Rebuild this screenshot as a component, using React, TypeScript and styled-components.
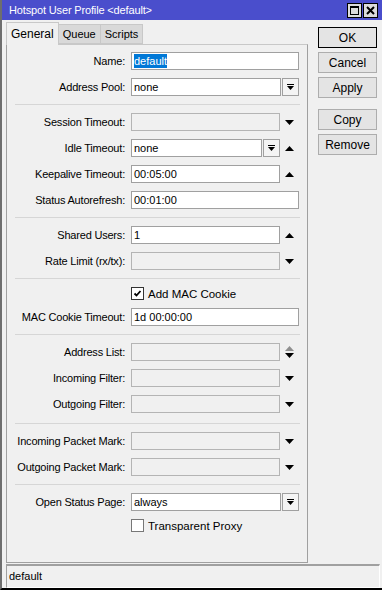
import React from "react";
import styled, { createGlobalStyle } from "styled-components";

const GlobalStyle = createGlobalStyle`
  html, body {
    margin: 0;
    padding: 0;
    background: #f0f0f0;
  }
  body {
    font-family: "Liberation Sans", Arial, sans-serif;
    font-size: 11px;
    color: #000;
  }
`;

type Arrow = "up" | "down" | "both" | undefined;

interface FieldRow {
  label: string;
  value?: string;
  disabled?: boolean;
  drop?: boolean;
  arrow?: Arrow;
  selected?: boolean;
}

const sections: FieldRow[][] = [
  [
    { label: "Name:", value: "default", selected: true },
    { label: "Address Pool:", value: "none", drop: true },
  ],
  [
    { label: "Session Timeout:", disabled: true, arrow: "down" },
    { label: "Idle Timeout:", value: "none", drop: true, arrow: "up" },
    { label: "Keepalive Timeout:", value: "00:05:00", arrow: "up" },
    { label: "Status Autorefresh:", value: "00:01:00" },
  ],
  [
    { label: "Shared Users:", value: "1", arrow: "up" },
    { label: "Rate Limit (rx/tx):", disabled: true, arrow: "down" },
  ],
];

const filterRows: FieldRow[] = [
  { label: "Address List:", disabled: true, arrow: "both" },
  { label: "Incoming Filter:", disabled: true, arrow: "down" },
  { label: "Outgoing Filter:", disabled: true, arrow: "down" },
];

const markRows: FieldRow[] = [
  { label: "Incoming Packet Mark:", disabled: true, arrow: "down" },
  { label: "Outgoing Packet Mark:", disabled: true, arrow: "down" },
];

function DropIcon() {
  return (
    <svg width="7" height="7" viewBox="0 0 7 7">
      <rect x="0" y="0" width="7" height="1" fill="#000" />
      <polygon points="0,2 7,2 3.5,6" fill="#000" />
    </svg>
  );
}

function SideArrow({ dir }: { dir: Arrow }) {
  if (dir === "both") {
    return (
      <svg width="9" height="12" viewBox="0 0 9 12">
        <polygon points="0,5 9,5 4.5,0" fill="#8f8f8f" />
        <polygon points="0,7 9,7 4.5,12" fill="#000" />
      </svg>
    );
  }
  return (
    <svg width="9" height="5" viewBox="0 0 9 5">
      {dir === "up" ? (
        <polygon points="0,5 9,5 4.5,0" fill="#000" />
      ) : (
        <polygon points="0,0 9,0 4.5,5" fill="#000" />
      )}
    </svg>
  );
}

function Row({ row }: { row: FieldRow }) {
  return (
    <RowWrap>
      <Label>{row.label}</Label>
      <Field>
        <Input $disabled={row.disabled}>
          {row.selected ? <Selected>{row.value}</Selected> : row.value}
        </Input>
        {row.drop && (
          <DropButton>
            <DropIcon />
          </DropButton>
        )}
        {row.arrow && (
          <ArrowCell>
            <SideArrow dir={row.arrow} />
          </ArrowCell>
        )}
      </Field>
    </RowWrap>
  );
}

export default function App() {
  return (
    <>
      <GlobalStyle />
      <Window>
        <TitleBar>
          <Title>Hotspot User Profile &lt;default&gt;</Title>
          <WinButtons>
            <WinButton>
              <svg width="9" height="9" viewBox="0 0 9 9">
                <rect x="0.5" y="0.5" width="8" height="8" fill="none" stroke="#000" />
                <rect x="0" y="0" width="9" height="2" fill="#000" />
              </svg>
            </WinButton>
            <WinButton>
              <svg width="9" height="9" viewBox="0 0 9 9">
                <path d="M1 1 L8 8 M8 1 L1 8" stroke="#000" strokeWidth="2" />
              </svg>
            </WinButton>
          </WinButtons>
        </TitleBar>

        <Body>
          <Main>
            <Tabs>
              <Tab $active>General</Tab>
              <Tab>Queue</Tab>
              <Tab>Scripts</Tab>
            </Tabs>
            <Panel>
              {sections.map((rows, i) => (
                <Section key={i}>
                  {rows.map((r) => (
                    <Row key={r.label} row={r} />
                  ))}
                </Section>
              ))}

              <Section>
                <RowWrap $short>
                  <span />
                  <CheckLine>
                    <CheckBox $checked>
                      <svg width="9" height="9" viewBox="0 0 9 9">
                        <path d="M1.5 4.5 L3.5 6.5 L7.5 2" fill="none" stroke="#000" strokeWidth="1.8" />
                      </svg>
                    </CheckBox>
                    Add MAC Cookie
                  </CheckLine>
                </RowWrap>
                <Row row={{ label: "MAC Cookie Timeout:", value: "1d 00:00:00" }} />
              </Section>

              <Section $tall>
                {filterRows.map((r) => (
                  <Row key={r.label} row={r} />
                ))}
              </Section>

              <Section>
                {markRows.map((r) => (
                  <Row key={r.label} row={r} />
                ))}
              </Section>

              <Section $last>
                <Row row={{ label: "Open Status Page:", value: "always", drop: true }} />
                <RowWrap $short>
                  <span />
                  <CheckLine>
                    <CheckBox />
                    Transparent Proxy
                  </CheckLine>
                </RowWrap>
              </Section>
            </Panel>
          </Main>

          <Buttons>
            <Button $default>OK</Button>
            <Button>Cancel</Button>
            <Button>Apply</Button>
            <ButtonGap />
            <Button>Copy</Button>
            <Button>Remove</Button>
          </Buttons>
        </Body>

        <StatusBar>default</StatusBar>
      </Window>
    </>
  );
}

const Window = styled.div`
  width: 382px;
  height: 590px;
  box-sizing: border-box;
  display: flex;
  flex-direction: column;
  border-left: 2px solid #6e6e6e;
  border-bottom: 2px solid #000;
  background: #f0f0f0;
  overflow: hidden;
`;

const TitleBar = styled.div`
  height: 20px;
  margin-left: -2px;
  background: #4a4ecc;
  display: flex;
  align-items: center;
  justify-content: space-between;
  padding: 0 4px 0 9px;
`;

const Title = styled.div`
  color: #fff;
  font-size: 11px;
  letter-spacing: -0.15px;
`;

const WinButtons = styled.div`
  display: flex;
  gap: 1px;
`;

const WinButton = styled.div`
  width: 13px;
  height: 13px;
  border: 1px solid #000;
  background: #dcdcdc;
  display: flex;
  align-items: center;
  justify-content: center;
`;

const Body = styled.div`
  flex: 1;
  display: flex;
  padding: 2px 0 0 4px;
`;

const Main = styled.div`
  width: 302px;
  display: flex;
  flex-direction: column;
`;

const Tabs = styled.div`
  display: flex;
  align-items: flex-end;
  height: 22px;
  position: relative;
  z-index: 1;
`;

const Tab = styled.div<{ $active?: boolean }>`
  box-sizing: border-box;
  height: ${({ $active }) => ($active ? "23px" : "20px")};
  margin-bottom: ${({ $active }) => ($active ? "-1px" : "0")};
  padding: ${({ $active }) => ($active ? "4px 4px 0 4px" : "3px 4px 0 4px")};
  border: 1px solid #c8c8c8;
  border-bottom: ${({ $active }) => ($active ? "none" : "1px solid #c8c8c8")};
  margin-left: ${({ $active }) => ($active ? "0" : "-1px")};
  background: ${({ $active }) => ($active ? "#f0f0f0" : "#d9d9d9")};
  font-size: ${({ $active }) => ($active ? "12px" : "11px")};
`;

const Panel = styled.div`
  flex: 1;
  box-sizing: border-box;
  border: 1px solid #a0a0a0;
  border-top-color: #c8c8c8;
  padding: 7px 7px 0 0;
`;

const Section = styled.div<{ $last?: boolean; $tall?: boolean }>`
  display: flex;
  flex-direction: column;
  gap: 8px;
  padding-bottom: ${({ $tall }) => ($tall ? "10px" : "8px")};
  margin-bottom: 8px;
  margin-left: 8px;
  border-bottom: ${({ $last }) => ($last ? "none" : "1px solid #d6d6d6")};
`;

const RowWrap = styled.div<{ $short?: boolean }>`
  display: grid;
  grid-template-columns: 110px 168px;
  column-gap: 6px;
  align-items: center;
  height: ${({ $short }) => ($short ? "13px" : "18px")};
`;

const Label = styled.div`
  display: flex;
  justify-content: flex-end;
  white-space: nowrap;
  letter-spacing: -0.2px;
`;

const Field = styled.div`
  display: flex;
  align-items: center;
  height: 18px;
`;

const Input = styled.div<{ $disabled?: boolean }>`
  flex: 1;
  box-sizing: border-box;
  height: 18px;
  line-height: 16px;
  padding-left: 2px;
  border: 1px solid ${({ $disabled }) => ($disabled ? "#b4b4b4" : "#a0a0a0")};
  background: ${({ $disabled }) => ($disabled ? "#f0f0f0" : "#fff")};
  white-space: nowrap;
  overflow: hidden;
`;

const Selected = styled.span`
  background: #0078d7;
  color: #fff;
  padding: 1px 0;
`;

const DropButton = styled.div`
  box-sizing: border-box;
  width: 17px;
  height: 18px;
  margin-left: 1px;
  border: 1px solid #a0a0a0;
  background: #f4f4f4;
  display: flex;
  align-items: center;
  justify-content: center;
`;

const ArrowCell = styled.div`
  width: 19px;
  display: flex;
  align-items: center;
  justify-content: center;
`;

const CheckLine = styled.div`
  display: flex;
  align-items: center;
  gap: 4px;
  font-size: 11.5px;
`;

const CheckBox = styled.div<{ $checked?: boolean }>`
  box-sizing: border-box;
  width: 13px;
  height: 13px;
  border: 1px solid ${({ $checked }) => ($checked ? "#333" : "#777")};
  background: #fff;
  display: flex;
  align-items: center;
  justify-content: center;
`;

const Buttons = styled.div`
  margin: 5px 0 0 10px;
  display: flex;
  flex-direction: column;
  gap: 4px;
`;

const Button = styled.div<{ $default?: boolean }>`
  box-sizing: border-box;
  width: 59px;
  height: 21px;
  border: 1px solid ${({ $default }) => ($default ? "#000" : "#adadad")};
  background: #e4e4e4;
  display: flex;
  align-items: center;
  justify-content: center;
  font-size: 12px;
`;

const ButtonGap = styled.div`
  height: 3px;
`;

const StatusBar = styled.div`
  box-sizing: border-box;
  height: 24px;
  margin: 1px 2px 0 4px;
  border: 1px solid #a0a0a0;
  border-right-color: #fff;
  border-bottom-color: #fff;
  border-top-width: 2px;
  padding: 4px 2px;
  font-size: 11px;
`;
